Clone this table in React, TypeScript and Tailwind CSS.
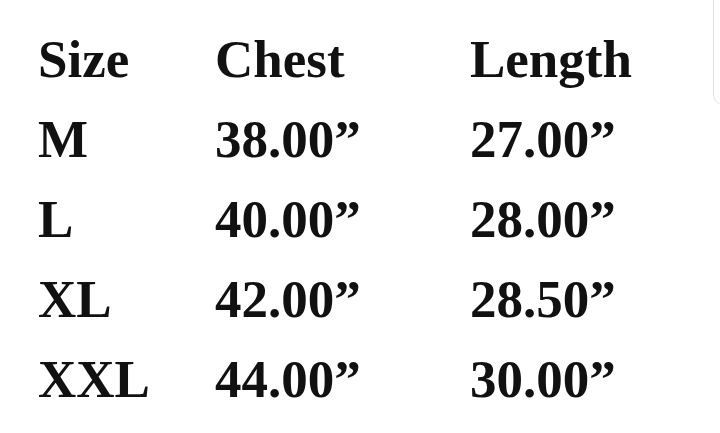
const rows = [
  ["Size", "Chest", "Length"],
  ["M", "38.00\u201D", "27.00\u201D"],
  ["L", "40.00\u201D", "28.00\u201D"],
  ["XL", "42.00\u201D", "28.50\u201D"],
  ["XXL", "44.00\u201D", "30.00\u201D"],
];

export default function App() {
  return (
    <div className="relative h-[433px] w-[720px] overflow-hidden bg-white">
      <div className="grid grid-cols-[177px_255px_1fr] pl-[38px] pt-[19px] font-['Liberation_Serif',serif] text-[53px] font-bold leading-[80px] text-[#111]">
        {rows.map((row) =>
          row.map((cell, i) => <div key={row[0] + i}>{cell}</div>)
        )}
      </div>
      {/* edge of a panel peeking in at the top right */}
      <div className="absolute right-[-20px] top-[-10px] h-[115px] w-[27px] rounded-bl-[10px] border border-[#e2e2e2] bg-white" />
    </div>
  );
}
